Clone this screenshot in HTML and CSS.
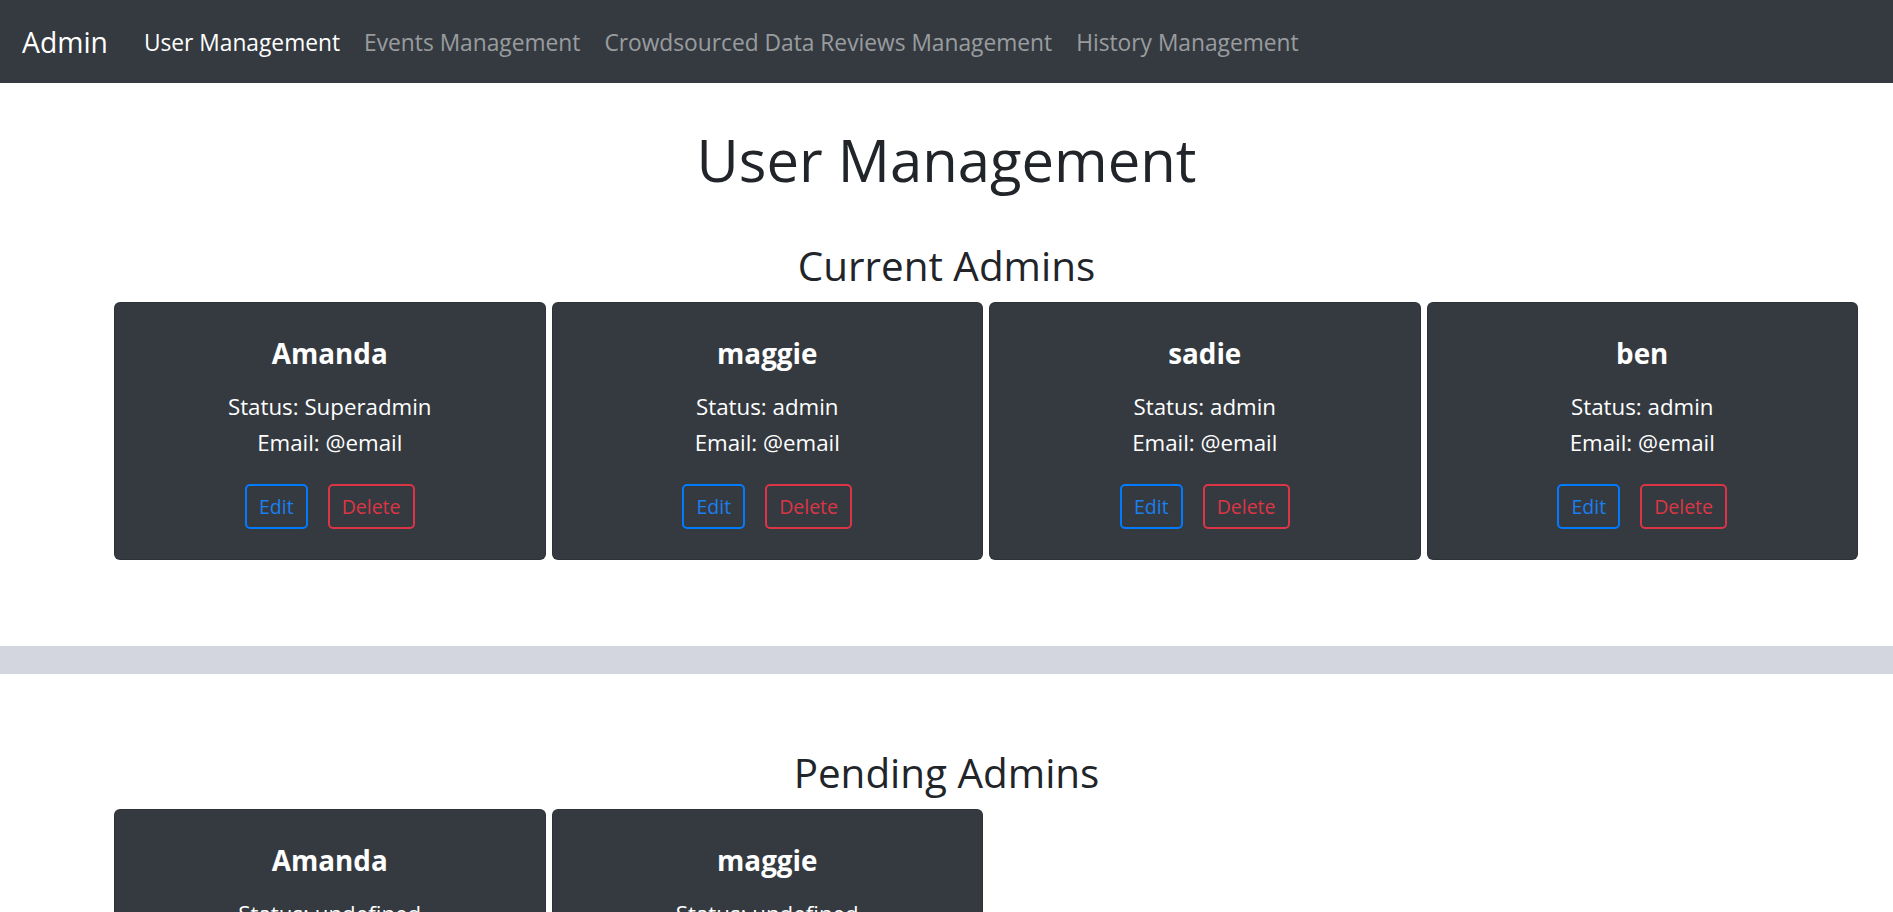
FILE: index.html
```html
<!DOCTYPE html>
<html lang="en">
<head>
<meta charset="utf-8">
<title>Admin - User Management</title>
<link rel="stylesheet" href="styles.css">
</head>
<body>
<div class="page">
  <nav class="navbar">
    <a class="brand" href="#">Admin</a>
    <ul class="nav-links">
      <li><a class="nav-link active" href="#">User Management</a></li>
      <li><a class="nav-link" href="#">Events Management</a></li>
      <li><a class="nav-link" href="#">Crowdsourced Data Reviews Management</a></li>
      <li><a class="nav-link" href="#">History Management</a></li>
    </ul>
  </nav>

  <main>
    <h1 class="page-title">User Management</h1>

    <section class="admins">
      <h3 class="section-title">Current Admins</h3>
      <div class="card-row">
        <div class="card">
          <h5 class="card-title">Amanda</h5>
          <p class="card-text">Status: Superadmin</p>
          <p class="card-text">Email: @email</p>
          <div class="card-actions">
            <button class="btn btn-primary">Edit</button>
            <button class="btn btn-danger">Delete</button>
          </div>
        </div>
        <div class="card">
          <h5 class="card-title">maggie</h5>
          <p class="card-text">Status: admin</p>
          <p class="card-text">Email: @email</p>
          <div class="card-actions">
            <button class="btn btn-primary">Edit</button>
            <button class="btn btn-danger">Delete</button>
          </div>
        </div>
        <div class="card">
          <h5 class="card-title">sadie</h5>
          <p class="card-text">Status: admin</p>
          <p class="card-text">Email: @email</p>
          <div class="card-actions">
            <button class="btn btn-primary">Edit</button>
            <button class="btn btn-danger">Delete</button>
          </div>
        </div>
        <div class="card">
          <h5 class="card-title">ben</h5>
          <p class="card-text">Status: admin</p>
          <p class="card-text">Email: @email</p>
          <div class="card-actions">
            <button class="btn btn-primary">Edit</button>
            <button class="btn btn-danger">Delete</button>
          </div>
        </div>
      </div>
    </section>

    <hr class="divider">

    <section class="admins pending">
      <h3 class="section-title">Pending Admins</h3>
      <div class="card-row">
        <div class="card">
          <h5 class="card-title">Amanda</h5>
          <p class="card-text">Status: undefined</p>
          <p class="card-text">Email: @email</p>
          <div class="card-actions">
            <button class="btn btn-primary">Approve</button>
            <button class="btn btn-danger">Deny</button>
          </div>
        </div>
        <div class="card">
          <h5 class="card-title">maggie</h5>
          <p class="card-text">Status: undefined</p>
          <p class="card-text">Email: @email</p>
          <div class="card-actions">
            <button class="btn btn-primary">Approve</button>
            <button class="btn btn-danger">Deny</button>
          </div>
        </div>
      </div>
    </section>
  </main>
</div>
</body>
</html>
```

FILE: styles.css
```css
* {
  box-sizing: border-box;
}

html, body {
  margin: 0;
  padding: 0;
}

body {
  font-family: "Open Sans", "Noto Sans", Arial, sans-serif;
  color: #212529;
  background: #ffffff;
}

.page {
  height: 100vh;
  overflow: hidden;
}

/* Navbar */
.navbar {
  display: flex;
  align-items: center;
  height: 83px;
  padding: 0 22px;
  background: #343a40;
}

.brand {
  font-size: 28.3px;
  line-height: 34px;
  color: #ffffff;
  text-decoration: none;
  margin-right: 24px;
}

.nav-links {
  display: flex;
  list-style: none;
  margin: 0;
  padding: 0;
}

.nav-link {
  display: block;
  font-size: 22.75px;
  line-height: 36px;
  padding: 2px 12px 0;
  color: rgba(255, 255, 255, 0.5);
  text-decoration: none;
}

.nav-link.active {
  color: #ffffff;
}

/* Headings */
.page-title {
  margin: 43px 0 0;
  font-size: 58px;
  line-height: 68px;
  font-weight: 400;
  text-align: center;
}

.section-title {
  margin: 0;
  font-size: 40.4px;
  line-height: 48px;
  font-weight: 400;
  text-align: center;
}

.admins {
  margin-top: 48px;
}

.pending {
  margin-top: 75px;
}

/* Cards */
.card-row {
  display: grid;
  grid-template-columns: repeat(4, 1fr);
  gap: 6px;
  width: 1744px;
  margin: 12px 0 0 114px;
}

.card {
  background: #343a40;
  border: 1px solid rgba(0, 0, 0, 0.125);
  border-radius: 6px;
  color: #ffffff;
  text-align: center;
  padding: 33px 20px 30px;
  height: 258px;
}

.card-title {
  margin: 0 0 19px;
  font-size: 27.8px;
  line-height: 34px;
  font-weight: 700;
}

.card-text {
  margin: 0;
  font-size: 22.3px;
  line-height: 36px;
}

.card-actions {
  display: flex;
  justify-content: center;
  gap: 20px;
  margin-top: 23px;
}

.btn {
  font-family: inherit;
  font-size: 19.5px;
  line-height: 29px;
  height: 45px;
  padding: 6px 12px;
  background: transparent;
  border: 2px solid;
  border-radius: 5px;
}

.btn-primary {
  color: #1a7ff0;
  border-color: #007bff;
}

.btn-danger {
  color: #dc3545;
  border-color: #dc3545;
}

/* Divider */
.divider {
  margin: 86px 0 0;
  height: 28px;
  border: 0;
  background: #d3d5df;
}
```
